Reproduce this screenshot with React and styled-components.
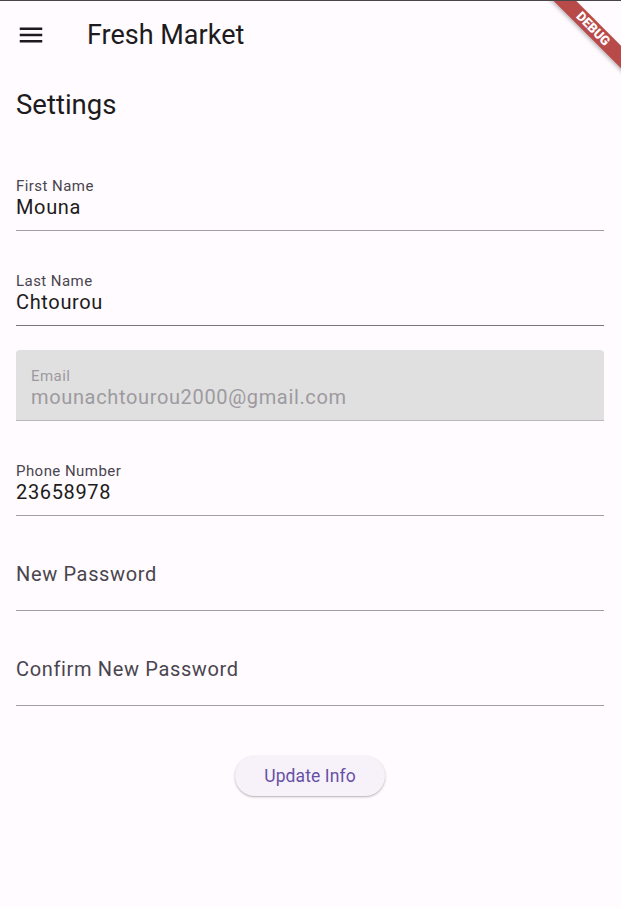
import React from "react";
import styled, { createGlobalStyle } from "styled-components";

const GlobalStyle = createGlobalStyle`
  html, body {
    margin: 0;
    padding: 0;
    background: #fffbfe;
    font-family: Roboto, "Liberation Sans", sans-serif;
  }
`;

const fields = [
  { label: "First Name", value: "Mouna", line: "#a19ea4" },
  { label: "Last Name", value: "Chtourou", line: "#78757b" },
  { label: "Email", value: "mounachtourou2000@gmail.com", disabled: true, line: "#bbb8bd" },
  { label: "Phone Number", value: "23658978", line: "#a19ea4" },
  { label: "New Password", line: "#a19ea4" },
  { label: "Confirm New Password", line: "#a19ea4" },
];

const App = () => {
  return (
    <>
      <GlobalStyle />
      <Page>
        <AppBar>
          <MenuButton aria-label="menu">
            <svg width="30" height="30" viewBox="0 0 24 24" fill="#1d1b20">
              <path d="M3 18h18v-2H3v2zm0-5h18v-2H3v2zm0-7v2h18V6H3z" />
            </svg>
          </MenuButton>
          <Title>Fresh Market</Title>
        </AppBar>

        <Content>
          <Heading>Settings</Heading>
          <Form>
            {fields.map((f) => (
              <Field key={f.label} $disabled={f.disabled} $line={f.line}>
                {f.value ? (
                  <>
                    <Label $disabled={f.disabled}>{f.label}</Label>
                    <Value $disabled={f.disabled}>{f.value}</Value>
                  </>
                ) : (
                  <Placeholder>{f.label}</Placeholder>
                )}
              </Field>
            ))}
          </Form>
          <ButtonRow>
            <Button>Update Info</Button>
          </ButtonRow>
        </Content>

        <BannerClip>
          <Banner>DEBUG</Banner>
        </BannerClip>
      </Page>
    </>
  );
};

export default App;

const Page = styled.div`
  position: relative;
  min-height: 907px;
  box-sizing: border-box;
  border-top: 1px solid #4a4548;
  overflow: hidden;
`;

const AppBar = styled.header`
  height: 68px;
  display: flex;
  align-items: center;
  padding-left: 16px;
`;

const MenuButton = styled.div`
  width: 30px;
  height: 30px;
  display: flex;
  align-items: center;
  justify-content: center;
`;

const Title = styled.h1`
  margin: 0 0 0 41px;
  font-size: 27px;
  font-weight: 400;
  color: #1d1b20;
  line-height: 34px;
`;

const Content = styled.main`
  padding: 20px 17px 0 16px;
`;

const Heading = styled.h2`
  margin: 0 0 39px;
  font-size: 27.5px;
  font-weight: 400;
  line-height: 32px;
  color: #1d1b20;
`;

const Form = styled.div`
  display: flex;
  flex-direction: column;
  gap: 24px;
`;

const Field = styled.div`
  height: 71px;
  box-sizing: border-box;
  border-bottom: 1px solid ${(p) => p.$line};
  background: ${(p) => (p.$disabled ? "#e0e0e0" : "transparent")};
  border-radius: 4px 4px 0 0;
  padding: 16px 0 0 ${(p) => (p.$disabled ? "15px" : "0")};
`;

const Label = styled.div`
  font-size: 15px;
  line-height: 20px;
  letter-spacing: 0.45px;
  color: ${(p) => (p.$disabled ? "#9d9a9f" : "#49454f")};
`;

const Value = styled.div`
  font-size: 20px;
  line-height: 22px;
  letter-spacing: 0.65px;
  color: ${(p) => (p.$disabled ? "#9d9a9f" : "#1d1b20")};
`;

const Placeholder = styled.div`
  padding-top: 6px;
  font-size: 20px;
  line-height: 24px;
  letter-spacing: 0.65px;
  color: #49454f;
`;

const ButtonRow = styled.div`
  display: flex;
  justify-content: center;
  margin-top: 50px;
`;

const Button = styled.button`
  height: 40px;
  padding: 0 29px;
  border: none;
  border-radius: 20px;
  background: #f7f2fa;
  color: #6750a4;
  font-family: Roboto, "Liberation Sans", sans-serif;
  font-size: 17.5px;
  font-weight: 400;
  letter-spacing: 0.1px;
  box-shadow: 0 1px 3px rgba(0, 0, 0, 0.22), 0 1px 1px rgba(0, 0, 0, 0.1);
  cursor: pointer;
`;

const BannerClip = styled.div`
  position: absolute;
  top: 0;
  right: 0;
  width: 100px;
  height: 100px;
  overflow: hidden;
  pointer-events: none;
`;

const Banner = styled.div`
  position: absolute;
  left: 12px;
  top: 20px;
  width: 120px;
  height: 16px;
  transform: rotate(45deg);
  background: #b94a4a;
  box-shadow: 0 2px 4px rgba(0, 0, 0, 0.25);
  color: #fff;
  font-family: Roboto, "Liberation Sans", sans-serif;
  font-size: 13px;
  font-weight: 900;
  line-height: 16px;
  text-align: center;
`;
